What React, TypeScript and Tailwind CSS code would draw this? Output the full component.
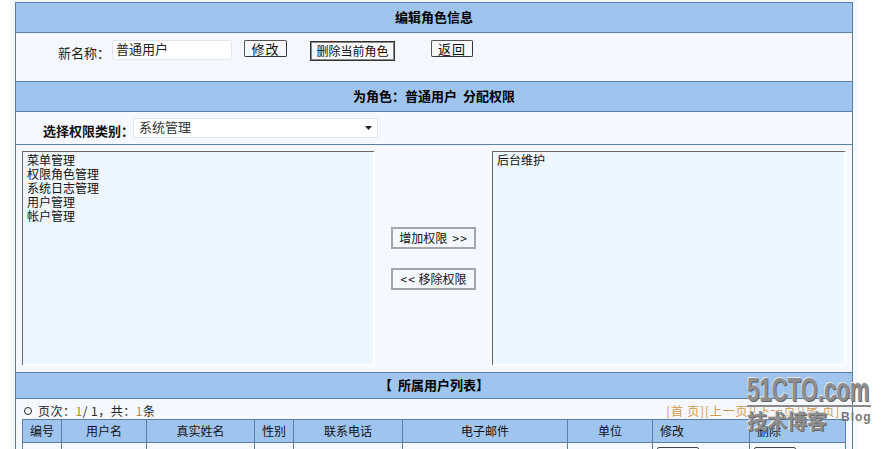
const font = '[font-family:"Noto_Sans_CJK_SC","Liberation_Sans",sans-serif]';

const permissions = ['菜单管理', '权限角色管理', '系统日志管理', '用户管理', '帐户管理'];

const columns = [
  { label: '编号', width: 'w-[40px]' },
  { label: '用户名', width: 'w-[85px]' },
  { label: '真实姓名', width: 'w-[108px]' },
  { label: '性别', width: 'w-[39px]' },
  { label: '联系电话', width: 'w-[109px]' },
  { label: '电子邮件', width: 'w-[165px]' },
  { label: '单位', width: 'w-[85px]' },
  { label: '修改', width: 'w-[97px]', left: true },
  { label: '删除', width: 'w-[96px]', left: true },
];

function Header({ children, height }: { children: React.ReactNode; height: string }) {
  return (
    <div
      className={`${height} flex items-center justify-center bg-[#9fc5ef] border-b border-[#5b7ead] pb-[2px] text-[13px] font-bold text-black`}
    >
      {children}
    </div>
  );
}

function SmallButton({ children, width }: { children: React.ReactNode; width: string }) {
  return (
    <button className={`${width} h-[17px] flex items-center justify-center rounded-[2px] border border-[#555] border-r-[#333] border-b-[#333] bg-[#f7f8fa] text-[13px] tracking-[1px] text-[#111]`}>
      {children}
    </button>
  );
}

function MoveButton({ children }: { children: React.ReactNode }) {
  return (
    <button className="w-[85px] h-[22px] flex items-center justify-center border-2 border-[#a6a6a8] bg-[#f5f8fe] text-[12px] text-[#111] whitespace-pre">
      {children}
    </button>
  );
}

function ListBox({ items, width }: { items: string[]; width: string }) {
  return (
    <div className={`${width} h-[215px] border-t border-l border-t-[#666] border-l-[#666] border-r-2 border-b-2 border-r-white border-b-white bg-[#eef6ff] pl-[4px] pt-[1px] text-[12px] leading-[14px] text-[#111]`}>
      {items.map((item) => (
        <div key={item}>{item}</div>
      ))}
    </div>
  );
}

export default function App() {
  return (
    <div className={`${font} relative w-[890px] h-[449px] overflow-hidden bg-white`}>
      <div className="ml-[10px] w-[848px] h-[449px] bg-[#f6f9ff] pt-[2px] px-[5px]">
        <div className="w-[838px] h-[447px] border-x border-t border-[#5b7ead] bg-[#f5f9ff]">
          <Header height="h-[30px]">编辑角色信息</Header>

          <div className="h-[49px] flex items-start border-b border-[#5b7ead] pt-[7px] text-[#222]">
            <span className="ml-[42px] mt-[5px] w-[54px] text-[13px] leading-[16px] whitespace-nowrap">新名称：</span>
            <input
              readOnly
              value="普通用户"
              className="w-[120px] h-[20px] rounded-[2px] bg-white border border-[#e2e6ec] pl-[3px] pb-[3px] text-[13px] text-[#222] outline-none"
            />
            <div className="ml-[12px]">
              <SmallButton width="w-[43px]">修改</SmallButton>
            </div>
            <button className="ml-[23px] mt-[1px] w-[85px] h-[20px] flex items-center justify-center border border-[#333] outline outline-1 -outline-offset-2 outline-[#888] bg-[#f7f8fa] text-[12px] text-[#111]">
              删除当前角色
            </button>
            <div className="ml-[36px]">
              <SmallButton width="w-[42px]">返回</SmallButton>
            </div>
          </div>

          <Header height="h-[30px]">为角色：普通用户&nbsp;&nbsp;分配权限</Header>

          <div className="h-[33px] flex items-start border-b border-[#5b7ead] pt-[6px]">
            <span className="ml-[27px] mt-[5px] w-[90px] text-[13px] leading-[16px] font-bold text-[#111] whitespace-nowrap">选择权限类别：</span>
            <div className="w-[245px] h-[20px] flex items-center justify-between rounded-[2px] border border-[#e2e6ec] bg-white pl-[5px] pr-[5px] text-[13px] text-[#333]">
              <span className="-mt-[3px]">系统管理</span>
              <svg width="7" height="4" viewBox="0 0 7 4">
                <path d="M0 0h7L3.5 4z" fill="#222" />
              </svg>
            </div>
          </div>

          <div className="h-[228px] flex items-start border-b border-[#5b7ead] pl-[6px] pt-[6px]">
            <ListBox items={permissions} width="w-[353px]" />
            <div className="ml-[16px] w-[85px] mt-[76px] flex flex-col gap-[19px]">
              <MoveButton>增加权限  <span className="tracking-[1px]">{'>>'}</span></MoveButton>
              <MoveButton><span className="tracking-[1px]">{'<<'}</span> 移除权限</MoveButton>
            </div>
            <div className="ml-[16px]">
              <ListBox items={['后台维护']} width="w-[354px]" />
            </div>
          </div>

          <Header height="h-[26px]">【&nbsp;&nbsp;所属用户列表】</Header>

          <div className="h-[20px] flex items-end justify-between pl-[7px] pr-[12px] pb-[1px] text-[12px] leading-[15px] text-[#222]">
            <span className="flex items-center tracking-[0.5px]">
              <span className="ml-[1px] mr-[6px] h-[8px] w-[8px] rounded-full border border-[#222]" />
              页次：<span className="text-[#b5854f]">1</span>/&nbsp;1，共：<span className="text-[#b5854f]">1</span>条
            </span>
            <span className="text-[#d19a45] tracking-[0.8px]">[首 页][上一页][下一页][尾 页]</span>
          </div>

          <div className="ml-[6px] w-[824px] border-t border-[#5b7ead] flex flex-col">
            <div className="flex h-[23px] bg-[#9fc5ef] border-b border-[#5b7ead] text-[12px] text-[#111]">
              {columns.map((col, i) => (
                <div
                  key={col.label}
                  className={`${col.width} flex items-center border-r border-[#5b7ead] ${i === 0 ? 'border-l' : ''} ${col.left ? 'justify-start pl-[7px]' : 'justify-center'}`}
                >
                  {col.label}
                </div>
              ))}
            </div>
            <div className="flex h-[8px]">
              {columns.map((col, i) => (
                <div
                  key={col.label}
                  className={`${col.width} border-r border-[#5b7ead] ${i === 0 ? 'border-l' : ''} ${col.left ? 'pl-[4px] pt-[4px]' : ''}`}
                >
                  {col.left && <div className="w-[42px] h-[8px] rounded-t-[2px] border border-[#444] bg-[#f7f8fa]" />}
                </div>
              ))}
            </div>
          </div>
        </div>
      </div>

      <div className="absolute left-[747px] top-[374px] w-[125px] h-[60px]">
        <div className="h-[31px] w-[190px] origin-left scale-x-[0.67] text-[33px] leading-[31px] font-bold [font-family:'Liberation_Sans',sans-serif] text-[#8e8e8e] [text-shadow:1px_1px_0_#5f5f5f,-1px_-1px_0_#e8e8e8]">
          51CTO.com
        </div>
        <div className="h-[2px] w-[124px] bg-[#8a8a8a]" />
        <div className="mt-[3px] flex items-start">
          <span className="w-[94px] text-[20px] leading-[22px] font-bold text-[#8e8e8e] whitespace-nowrap [text-shadow:1px_1px_0_#666,-1px_-1px_0_#eee]">
            技术博客
          </span>
          <span className="text-[12px] leading-[14px] font-bold [font-family:'Liberation_Sans',sans-serif] tracking-[1px] text-[#777]">
            Blog
          </span>
        </div>
      </div>
    </div>
  );
}
